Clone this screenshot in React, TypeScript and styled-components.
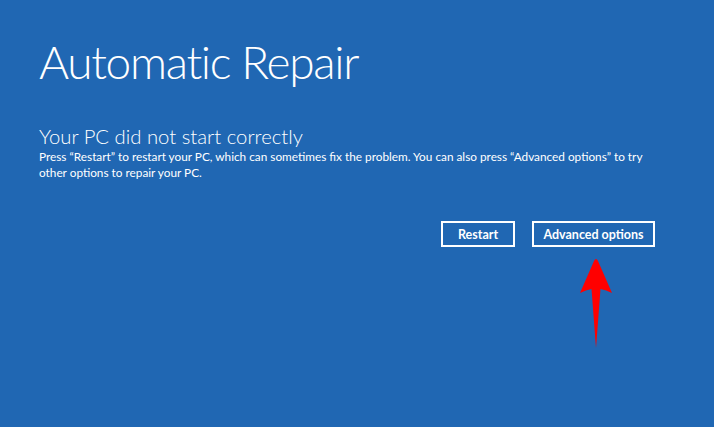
import React from "react";
import styled, { createGlobalStyle } from "styled-components";

const GlobalStyle = createGlobalStyle`
  html, body {
    margin: 0;
    padding: 0;
    background: #2067b3;
  }
  #root {
    min-height: 100vh;
  }
`;

const Screen = styled.div`
  position: relative;
  width: 714px;
  height: 427px;
  background: #2067b3;
  color: #ffffff;
  font-family: Lato, "Open Sans", sans-serif;
  overflow: hidden;
`;

const Content = styled.div`
  display: flex;
  flex-direction: column;
  padding: 34px 20px 0 39px;
`;

const Title = styled.h1`
  margin: 0;
  font-size: 46px;
  font-weight: 300;
  line-height: 56px;
  letter-spacing: -1.3px;
`;

const Subtitle = styled.h2`
  margin: 34px 0 0;
  font-size: 20.3px;
  font-weight: 300;
  line-height: 25px;
`;

const Message = styled.p`
  margin: 0;
  font-size: 11.8px;
  line-height: 16px;
  max-width: 620px;
`;

const Actions = styled.div`
  display: flex;
  justify-content: flex-end;
  gap: 17px;
  margin-top: 40px;
  padding-right: 39px;
`;

const ActionButton = styled.button<{ $width: number }>`
  width: ${(p) => p.$width}px;
  height: 26px;
  box-sizing: border-box;
  border: 2px solid #ffffff;
  background: transparent;
  color: #ffffff;
  font-family: Lato, "Open Sans", sans-serif;
  font-size: 12.5px;
  font-weight: 700;
  padding: 0;
  cursor: pointer;
`;

const Pointer = styled.svg`
  position: absolute;
  left: 578px;
  top: 257px;
`;

const UpArrow = () => (
  <Pointer width="36" height="94" viewBox="0 0 36 94">
    <path
      d="M18 2 Q19 2 20 4 L34 36 Q28 33 22.5 32 L18 91 L13.5 32 Q8 33 2 36 L16 4 Q17 2 18 2 Z"
      fill="#ff0000"
    />
  </Pointer>
);

export default function App() {
  return (
    <>
      <GlobalStyle />
      <Screen>
        <Content>
          <Title>Automatic Repair</Title>
          <Subtitle>Your PC did not start correctly</Subtitle>
          <Message>
            Press “Restart” to restart your PC, which can sometimes fix the
            problem. You can also press “Advanced options” to try other options
            to repair your PC.
          </Message>
          <Actions>
            <ActionButton $width={74}>Restart</ActionButton>
            <ActionButton $width={123}>Advanced options</ActionButton>
          </Actions>
        </Content>
        <UpArrow />
      </Screen>
    </>
  );
}
